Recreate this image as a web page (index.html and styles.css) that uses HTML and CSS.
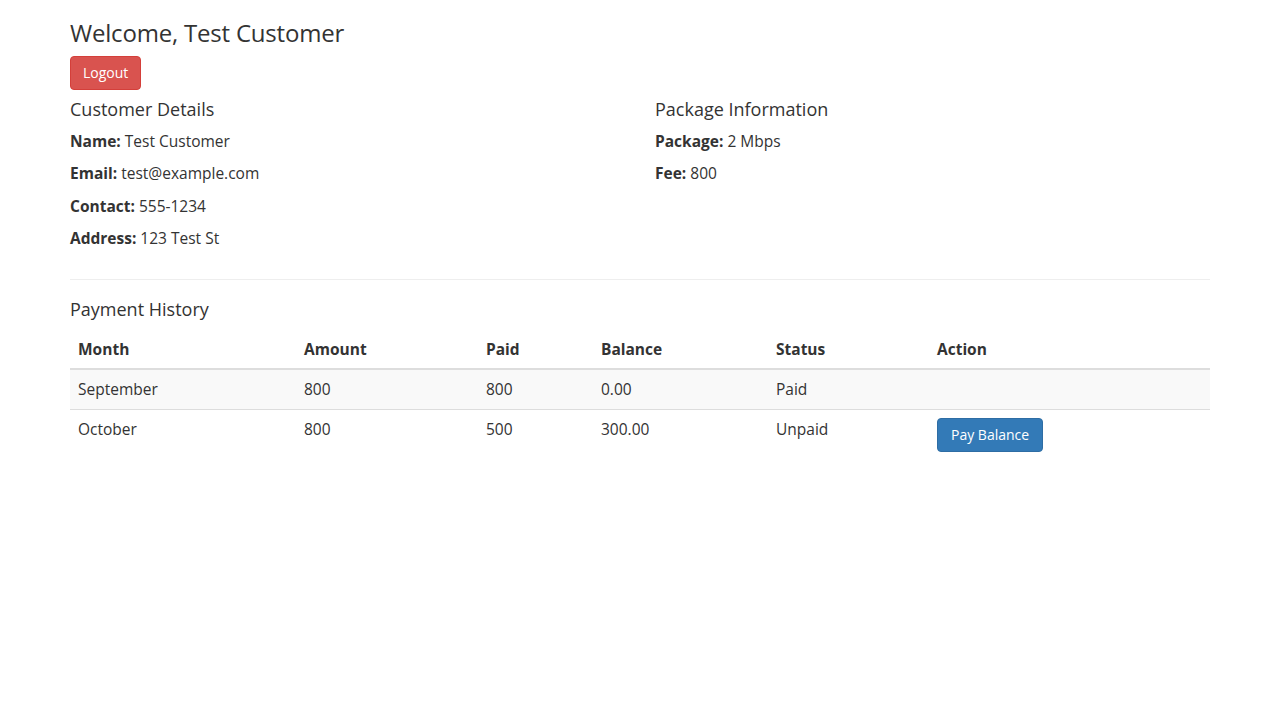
FILE: index.html
```html
<!DOCTYPE html>
<html lang="en">
<head>
<meta charset="utf-8">
<title>Customer Dashboard</title>
<link rel="stylesheet" href="styles.css">
</head>
<body>
<div class="container">
  <h3 class="title">Welcome, Test Customer</h3>
  <a class="btn btn-danger">Logout</a>
  <div class="row">
    <div class="col">
      <h4>Customer Details</h4>
      <p><strong>Name:</strong> Test Customer</p>
      <p><strong>Email:</strong> test@example.com</p>
      <p><strong>Contact:</strong> 555-1234</p>
      <p><strong>Address:</strong> 123 Test St</p>
    </div>
    <div class="col">
      <h4>Package Information</h4>
      <p><strong>Package:</strong> 2 Mbps</p>
      <p><strong>Fee:</strong> 800</p>
    </div>
  </div>
  <hr>
  <h4>Payment History</h4>
  <table class="table">
    <thead>
      <tr>
        <th class="c-month">Month</th>
        <th class="c-amount">Amount</th>
        <th class="c-paid">Paid</th>
        <th class="c-balance">Balance</th>
        <th class="c-status">Status</th>
        <th>Action</th>
      </tr>
    </thead>
    <tbody>
      <tr class="odd">
        <td>September</td>
        <td>800</td>
        <td>800</td>
        <td>0.00</td>
        <td>Paid</td>
        <td></td>
      </tr>
      <tr>
        <td>October</td>
        <td>800</td>
        <td>500</td>
        <td>300.00</td>
        <td>Unpaid</td>
        <td><a class="btn btn-primary">Pay Balance</a></td>
      </tr>
    </tbody>
  </table>
</div>
</body>
</html>
```

FILE: styles.css
```css
* { box-sizing: border-box; }
html, body { margin: 0; padding: 0; }
body {
  font-family: "Open Sans", "Liberation Sans", sans-serif;
  font-size: 15.5px;
  line-height: 22.3px;
  color: #333;
  background: #fff;
}
.container {
  width: 1170px;
  margin: 0 auto;
  padding: 0 15px;
}
h3, h4 {
  font-weight: 400;
  line-height: 1.1;
  color: #333;
}
h3 { font-size: 24px; margin: 20px 0 10px; letter-spacing: -0.2px; }
h4 { font-size: 18px; margin: 10px 0 10px; }
p { margin: 0 0 10px; }
strong { font-weight: 700; }
.row {
  display: flex;
  margin: 0 -15px;
}
.col {
  width: 50%;
  padding: 0 15px;
}
hr {
  margin: 20px 0;
  border: 0;
  border-top: 1px solid #eee;
  height: 0;
}
.btn {
  display: inline-block;
  padding: 6px 12px;
  font-size: 14px;
  line-height: 20px;
  border: 1px solid transparent;
  border-radius: 4px;
  color: #fff;
  cursor: pointer;
  vertical-align: middle;
}
.btn-danger { background: #d9534f; border-color: #d43f3a; }
.btn-primary { background: #337ab7; border-color: #2e6da4; padding: 6px 13px; }
.table {
  width: 100%;
  border-collapse: collapse;
  border-spacing: 0;
  margin-bottom: 20px;
}
.table th, .table td {
  padding: 8px;
  line-height: 23px;
  text-align: left;
  vertical-align: top;
  border-top: 1px solid #ddd;
}
.table th {
  font-weight: 700;
  line-height: 22px;
  vertical-align: bottom;
  border-top: 0;
  border-bottom: 2px solid #ddd;
}
.table tr.odd td { background: #f9f9f9; }
.c-month { width: 226px; }
.c-amount { width: 182px; }
.c-paid { width: 115px; }
.c-balance { width: 175px; }
.c-status { width: 161px; }
```
